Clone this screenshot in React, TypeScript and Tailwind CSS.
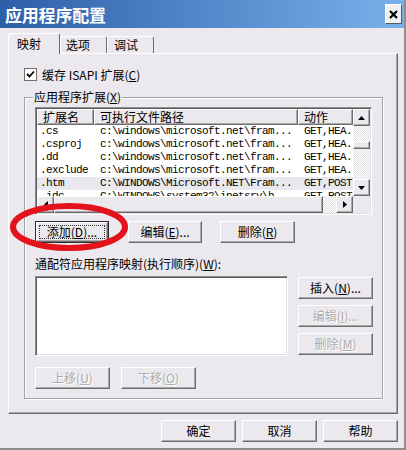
import React from 'react';

const raised =
  'bg-[#ebe9ed] border border-t-white border-l-white border-r-[#6d6d6d] border-b-[#6d6d6d] shadow-[inset_-1px_-1px_0_#a9a9a9]';
const sunken =
  'bg-white border border-t-[#8e8e8e] border-l-[#8e8e8e] border-r-white border-b-white shadow-[inset_1px_1px_0_#5a5a5a,inset_-1px_-1px_0_#e2e1e5] p-[1px]';
const hatched =
  'bg-[image:repeating-conic-gradient(#ffffff_0%_25%,#e2e1e6_0%_50%)] bg-[length:2px_2px]';

type BtnProps = {
  children: React.ReactNode;
  className?: string;
  disabled?: boolean;
  isDefault?: boolean;
};

const Button: React.FC<BtnProps> = ({ children, className = 'w-[75px]', disabled, isDefault }) => {
  if (isDefault) {
    return (
      <div className={`h-[22px] border border-[#2b2b2b] ${className}`}>
        <div className={`h-full p-[2px] ${raised}`}>
          <div className="h-full border border-dotted border-[#333] flex items-center justify-center leading-none">
            {children}
          </div>
        </div>
      </div>
    );
  }
  return (
    <div
      className={`h-[22px] flex items-center justify-center leading-none ${raised} ${className} ${
        disabled ? 'text-[#acacac] [text-shadow:1px_1px_0_#ffffff]' : 'text-black'
      }`}
    >
      {children}
    </div>
  );
};

const Arrow = ({ dir }: { dir: 'up' | 'down' | 'left' | 'right' }) => {
  if (dir === 'up' || dir === 'down') {
    return (
      <svg width="7" height="4" viewBox="0 0 7 4">
        <polygon points={dir === 'up' ? '3.5,0 7,4 0,4' : '0,0 7,0 3.5,4'} fill="#000" />
      </svg>
    );
  }
  return (
    <svg width="4" height="7" viewBox="0 0 4 7">
      <polygon points={dir === 'left' ? '4,0 4,7 0,3.5' : '0,0 0,7 4,3.5'} fill="#000" />
    </svg>
  );
};

const ScrollButton = ({ dir }: { dir: 'up' | 'down' | 'left' | 'right' }) => (
  <div className={`w-[17px] h-[17px] shrink-0 flex items-center justify-center ${raised}`}>
    <Arrow dir={dir} />
  </div>
);

const rows: [string, string, string, boolean?][] = [
  ['.cs', 'c:\\windows\\microsoft.net\\fram...', 'GET,HEA.'],
  ['.csproj', 'c:\\windows\\microsoft.net\\fram...', 'GET,HEA.'],
  ['.dd', 'c:\\windows\\microsoft.net\\fram...', 'GET,HEA.'],
  ['.exclude', 'c:\\windows\\microsoft.net\\fram...', 'GET,HEA.'],
  ['.htm', 'C:\\WINDOWS\\Microsoft.NET\\Fram...', 'GET,POST', true],
  ['.idc', 'C:\\WINDOWS\\system32\\inetsrv\\h...', 'GET,POST'],
];

const App: React.FC = () => {
  return (
    <div className="relative w-[406px] h-[450px] overflow-hidden bg-[#ebe9ed] border-r-2 border-b-2 border-r-[#8e8e8e] border-b-[#8e8e8e] font-['Noto_Sans_CJK_SC',sans-serif] text-[12px] text-black">
      {/* Title bar */}
      <div className="h-[28px] flex items-center justify-between pl-[5px] pr-[2px] bg-linear-to-r from-[#2d5fa9] to-[#7ab1ea]">
        <span className="text-white text-[17px] font-bold leading-none tracking-[-0.2px]">应用程序配置</span>
        <div className="w-[17px] h-[20px] bg-[#f1f0f3] border border-t-white border-l-white border-r-[#5a5a5a] border-b-[#5a5a5a] flex items-center justify-center">
          <svg width="9" height="9" viewBox="0 0 9 9">
            <path d="M1 1 L8 8 M8 1 L1 8" stroke="#000" strokeWidth="2.2" />
          </svg>
        </div>
      </div>

      {/* Tabs */}
      <div className="mt-[5px] h-[20px] pl-[8px] flex items-end">
        <div className="relative z-10 mb-[-1px] h-[21px] w-[52px] pl-[8px] pt-[3px] bg-[#ebe9ed] border-t border-l border-r border-t-white border-l-white border-r-[#6d6d6d] rounded-t-[3px] leading-[14px]">
          映射
        </div>
        <div className="h-[17px] w-[47px] pl-[5px] pt-[1px] border-t border-l border-r border-t-white border-l-white border-r-[#6d6d6d] rounded-t-[3px] leading-[14px]">
          选项
        </div>
        <div className="h-[17px] w-[47px] pl-[6px] pt-[1px] border-t border-l border-r border-t-white border-l-white border-r-[#6d6d6d] rounded-t-[3px] leading-[14px]">
          调试
        </div>
      </div>

      {/* Tab panel */}
      <div className="ml-[8px] w-[390px] h-[361px] border border-t-white border-l-white border-r-[#6d6d6d] border-b-[#6d6d6d] shadow-[inset_-1px_-1px_0_#a5a5a5] pl-[15px] pt-[14px]">
        {/* Cache checkbox */}
        <div className="h-[13px] flex items-center">
          <div className="w-[13px] h-[13px] bg-white border border-[#6f6f6f] flex items-center justify-center">
            <svg width="9" height="9" viewBox="0 0 9 9">
              <path d="M1 4 L3.5 6.5 L8 1.5" stroke="#000" strokeWidth="1.8" fill="none" />
            </svg>
          </div>
          <span className="ml-[5px] leading-none">
            缓存 ISAPI 扩展(<u>C</u>)
          </span>
        </div>

        {/* Group box */}
        <div className="relative mt-[16px] w-[359px] h-[302px] border border-[#a3a3a3] shadow-[1px_1px_0_#ffffff,inset_1px_1px_0_#ffffff] pl-[10px] pt-[9px]">
          <span className="absolute left-[8px] top-[-9px] px-[1px] bg-[#ebe9ed] leading-[16px]">
            应用程序扩展(<u>X</u>)
          </span>

          {/* List view */}
          <div className={`w-[337px] h-[108px] ${sunken}`}>
            <div className="h-full flex flex-col bg-white">
              <div className="h-[87px] flex">
                <div className="w-[316px] overflow-hidden">
                  <div className="h-[16px] flex">
                    <div className={`w-[57px] shrink-0 pl-[5px] leading-[13px] ${raised}`}>扩展名</div>
                    <div className={`w-[204px] shrink-0 pl-[5px] leading-[13px] ${raised}`}>可执行文件路径</div>
                    <div className={`w-[55px] shrink-0 pl-[5px] leading-[13px] ${raised}`}>动作</div>
                  </div>
                  {rows.map(([ext, path, verbs, sel]) => (
                    <div
                      key={ext}
                      className={`h-[13px] flex font-['Liberation_Mono',monospace] text-[11px] tracking-[-0.6px] leading-[13px] whitespace-nowrap ${
                        sel ? 'bg-[#e9e8ee]' : ''
                      }`}
                    >
                      <div className="w-[57px] shrink-0 pl-[3px] overflow-hidden">{ext}</div>
                      <div className="w-[204px] shrink-0 pl-[6px] overflow-hidden">{path}</div>
                      <div className="w-[55px] shrink-0 pl-[6px] overflow-hidden">{verbs}</div>
                    </div>
                  ))}
                </div>
                {/* Vertical scrollbar */}
                <div className={`w-[17px] flex flex-col ${hatched}`}>
                  <ScrollButton dir="up" />
                  <div className="flex-1 pt-[15px]">
                    <div className={`h-[8px] ${raised}`} />
                  </div>
                  <ScrollButton dir="down" />
                </div>
              </div>
              {/* Horizontal scrollbar */}
              <div className="h-[17px] flex">
                <div className={`w-[316px] flex ${hatched}`}>
                  <ScrollButton dir="left" />
                  <div className={`w-[269px] h-[17px] ${raised}`} />
                  <div className="flex-1" />
                  <ScrollButton dir="right" />
                </div>
                <div className="w-[17px] h-[17px] bg-[#ebe9ed]" />
              </div>
            </div>
          </div>

          {/* Extension buttons */}
          <div className="mt-[6px] flex">
            <Button isDefault className="w-[74px]">
              添加(<u>D</u>)...
            </Button>
            <Button className="w-[74px] ml-[19px]">
              编辑(<u>E</u>)...
            </Button>
            <Button className="w-[75px] ml-[18px]">
              删除(<u>R</u>)
            </Button>
          </div>

          <div className="mt-[13px] leading-[16px]">
            通配符应用程序映射(执行顺序)(<u>W</u>):
          </div>

          <div className="mt-[4px] flex gap-[10px]">
            <div className={`w-[253px] h-[80px] ${sunken}`} />
            <div className="pt-[1px] flex flex-col gap-[6px]">
              <Button>
                插入(<u>N</u>)...
              </Button>
              <Button disabled>
                编辑(<u>I</u>)...
              </Button>
              <Button disabled>
                删除(<u>M</u>)
              </Button>
            </div>
          </div>

          <div className="mt-[11px] flex gap-[11px]">
            <Button disabled>
              上移(<u>U</u>)
            </Button>
            <Button disabled>
              下移(<u>O</u>)
            </Button>
          </div>
        </div>
      </div>

      {/* Dialog buttons */}
      <div className="mt-[6px] pr-[6px] flex justify-end gap-[6px]">
        <Button>确定</Button>
        <Button>取消</Button>
        <Button>帮助</Button>
      </div>

      {/* Red annotation ellipse */}
      <svg className="absolute left-[7px] top-[200px] pointer-events-none" width="124" height="54" viewBox="0 0 124 54">
        <ellipse cx="62" cy="27" rx="56" ry="21" fill="none" stroke="#e3121b" strokeWidth="6" />
      </svg>
    </div>
  );
};

export default App;
